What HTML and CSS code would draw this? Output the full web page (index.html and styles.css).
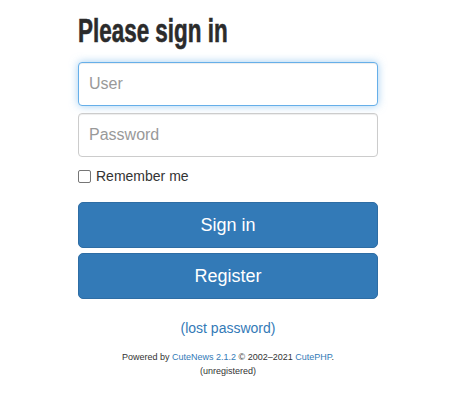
FILE: index.html
```html
<!DOCTYPE html>
<html>
<head>
<meta charset="utf-8">
<link rel="stylesheet" href="styles.css">
</head>
<body>
<div class="wrap">
  <h2 class="title"><span class="title-text">Please sign in</span></h2>
  <form class="form">
    <input class="field focus" type="text" placeholder="User">
    <input class="field" type="password" placeholder="Password">
    <label class="remember"><span class="box"></span>Remember me</label>
    <button class="btn" type="button">Sign in</button>
    <button class="btn" type="button">Register</button>
  </form>
  <div class="lost"><a href="#">(lost password)</a></div>
  <div class="powered">Powered by <a href="#">CuteNews 2.1.2</a> © 2002–2021 <a href="#">CutePHP</a>.<br>(unregistered)</div>
</div>
</body>
</html>
```
FILE: styles.css
```css
* { box-sizing: border-box; }
body {
  margin: 0;
  font-family: "Liberation Sans", Arial, sans-serif;
  background: #fff;
  color: #333;
}
.wrap {
  width: 300px;
  margin-left: calc(50% - 151px);
  padding-top: 14px;
}
.title {
  margin: 0 0 14px 0;
  height: 34px;
  font-family: "Liberation Sans", Arial, sans-serif;
  font-weight: bold;
  font-size: 33px;
  line-height: 34px;
  color: #2b2b2b;
  white-space: nowrap;
}
.title-text {
  display: inline-block;
  transform: scaleX(0.68);
  transform-origin: left center;
  -webkit-text-stroke: 0.6px #2b2b2b;
}
.form {
  display: flex;
  flex-direction: column;
}
.field {
  display: block;
  width: 100%;
  height: 44px;
  padding: 8px 10px;
  font-family: "Liberation Sans", Arial, sans-serif;
  font-size: 16px;
  color: #555;
  border: 1px solid #ccc;
  border-radius: 4px;
  margin-bottom: 7px;
  outline: none;
  box-shadow: inset 0 1px 1px rgba(0,0,0,.075);
}
.field::placeholder { color: #999; }
.field.focus {
  border-color: #66afe9;
  box-shadow: inset 0 1px 1px rgba(0,0,0,.075), 0 0 8px rgba(102,175,233,.6);
}
.remember {
  display: flex;
  align-items: center;
  font-size: 14px;
  color: #333;
  margin-top: 0;
  height: 24px;
  margin-bottom: 14px;
}
.box {
  width: 13px;
  height: 13px;
  border: 1px solid #767676;
  border-radius: 2px;
  margin: 0 5px 0 0;
  background: #fff;
}
.btn {
  height: 46px;
  width: 100%;
  background: #337ab7;
  border: 1px solid #2e6da4;
  border-radius: 5px;
  color: #fff;
  font-family: "Liberation Sans", Arial, sans-serif;
  font-size: 18px;
  margin-bottom: 5px;
  cursor: pointer;
}
.lost {
  text-align: center;
  font-size: 14px;
  margin-top: 16px;
}
a { color: #337ab7; text-decoration: none; }
.powered {
  text-align: center;
  font-size: 9px;
  line-height: 14px;
  margin-top: 14px;
  color: #333;
}
```
